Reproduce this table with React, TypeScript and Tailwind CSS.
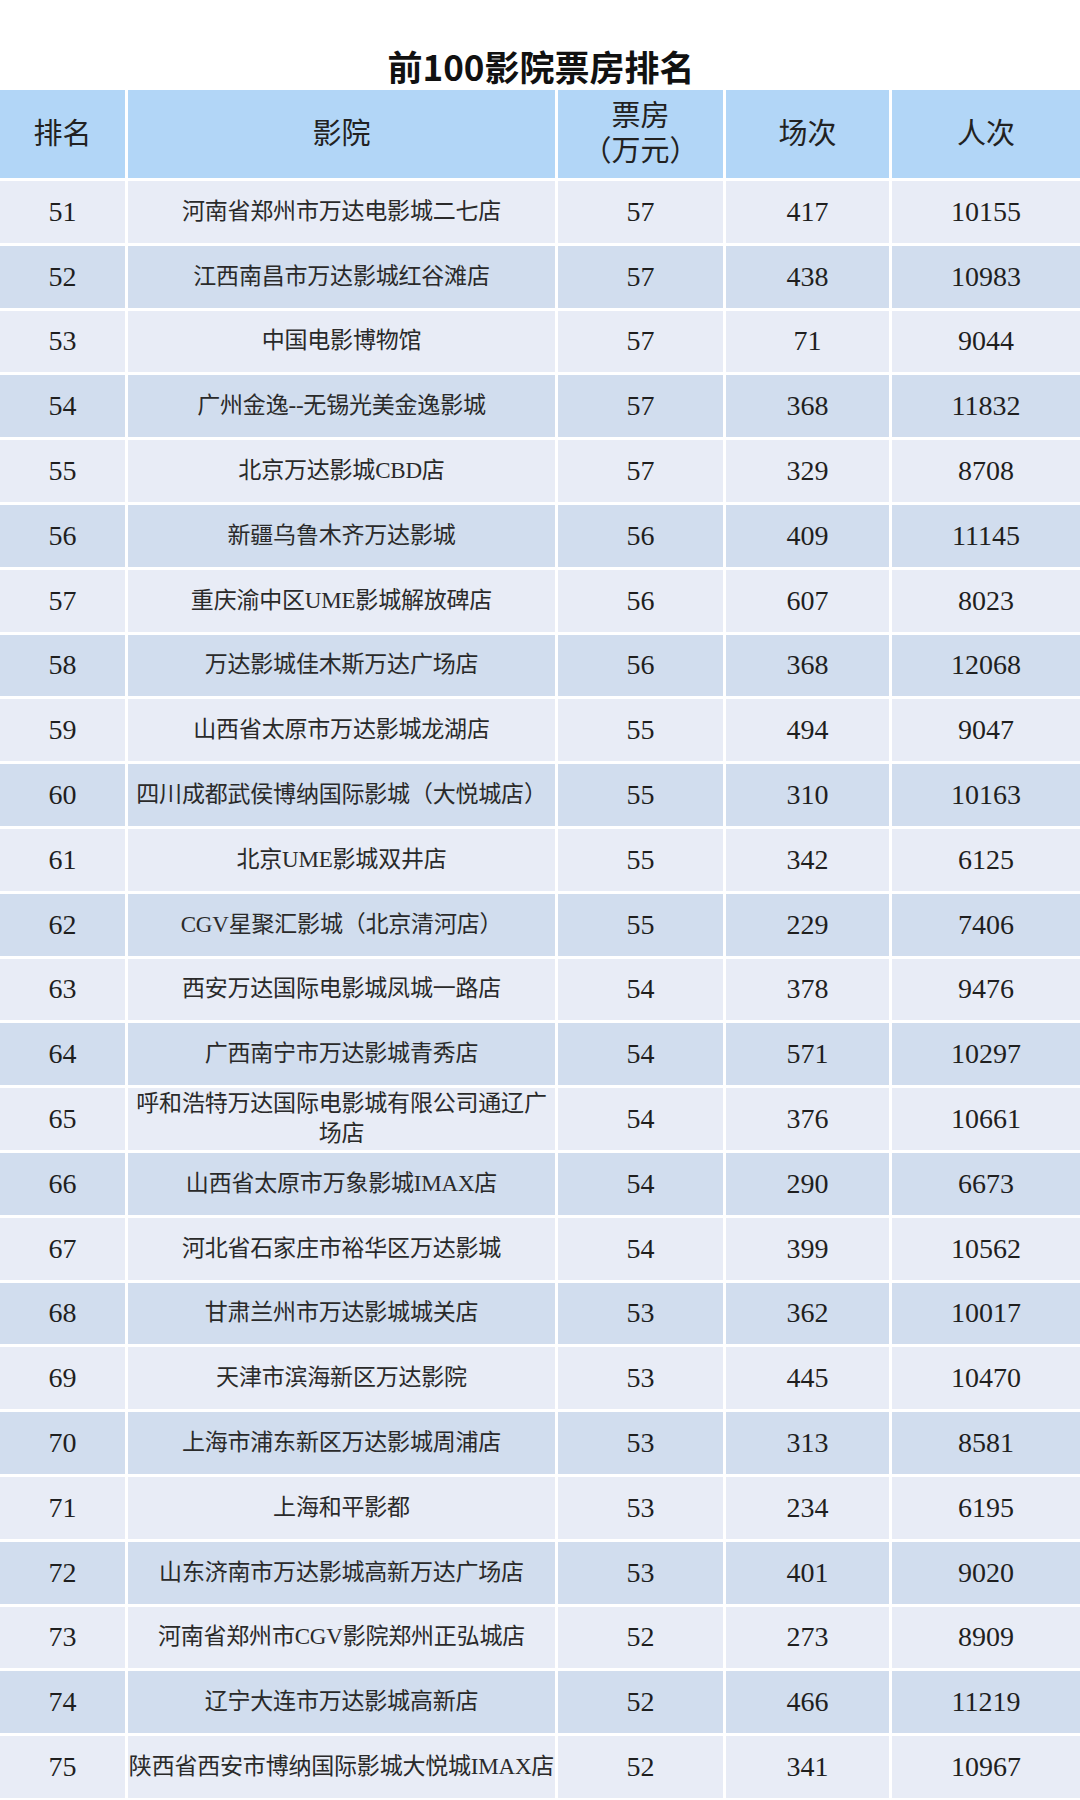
import React from "react";

const rows: [number, React.ReactNode, number, number, number][] = [
  [51, "河南省郑州市万达电影城二七店", 57, 417, 10155],
  [52, "江西南昌市万达影城红谷滩店", 57, 438, 10983],
  [53, "中国电影博物馆", 57, 71, 9044],
  [54, "广州金逸--无锡光美金逸影城", 57, 368, 11832],
  [55, "北京万达影城CBD店", 57, 329, 8708],
  [56, "新疆乌鲁木齐万达影城", 56, 409, 11145],
  [57, "重庆渝中区UME影城解放碑店", 56, 607, 8023],
  [58, "万达影城佳木斯万达广场店", 56, 368, 12068],
  [59, "山西省太原市万达影城龙湖店", 55, 494, 9047],
  [60, "四川成都武侯博纳国际影城（大悦城店）", 55, 310, 10163],
  [61, "北京UME影城双井店", 55, 342, 6125],
  [62, "CGV星聚汇影城（北京清河店）", 55, 229, 7406],
  [63, "西安万达国际电影城凤城一路店", 54, 378, 9476],
  [64, "广西南宁市万达影城青秀店", 54, 571, 10297],
  [
    65,
    <>
      呼和浩特万达国际电影城有限公司通辽广
      <br />
      场店
    </>,
    54,
    376,
    10661,
  ],
  [66, "山西省太原市万象影城IMAX店", 54, 290, 6673],
  [67, "河北省石家庄市裕华区万达影城", 54, 399, 10562],
  [68, "甘肃兰州市万达影城城关店", 53, 362, 10017],
  [69, "天津市滨海新区万达影院", 53, 445, 10470],
  [70, "上海市浦东新区万达影城周浦店", 53, 313, 8581],
  [71, "上海和平影都", 53, 234, 6195],
  [72, "山东济南市万达影城高新万达广场店", 53, 401, 9020],
  [73, "河南省郑州市CGV影院郑州正弘城店", 52, 273, 8909],
  [74, "辽宁大连市万达影城高新店", 52, 466, 11219],
  [75, "陕西省西安市博纳国际影城大悦城IMAX店", 52, 341, 10967],
];

const serif = "font-['Liberation_Serif','Noto_Sans_CJK_SC',serif]";

export default function App() {
  return (
    <div className="w-[1080px] h-[1800px] overflow-hidden bg-white text-[#1f1f1f]">
      <div className="h-[90px] flex items-end justify-center pb-[2px]">
        <h1 className="font-['Noto_Sans_CJK_SC',sans-serif] font-bold text-[35px] leading-[44px] text-[#111] pl-[2px]">
          前100影院票房排名
        </h1>
      </div>
      <div
        className={`grid grid-cols-[125px_427px_165px_163px_188px] gap-[3px] ${serif}`}
      >
        {["排名", "影院", null, "场次", "人次"].map((h, i) => (
          <div
            key={i}
            className="h-[88px] bg-[#b2d6f7] flex flex-col items-center justify-center text-[29px] leading-[35px] text-[#222]"
          >
            {h ?? (
              <>
                <span>票房</span>
                <span>（万元）</span>
              </>
            )}
          </div>
        ))}
        {rows.map(([rank, name, box, shows, people], idx) => {
          const bg = idx % 2 === 0 ? "bg-[#e8ecf6]" : "bg-[#d1ddee]";
          const num = `h-[61.8px] ${bg} flex items-center justify-center text-[28px] leading-none`;
          return (
            <React.Fragment key={rank}>
              <div className={num}>{rank}</div>
              <div
                className={`h-[61.8px] ${bg} flex items-center justify-center text-center whitespace-nowrap text-[23px] leading-[30px] text-[#2a2a2a] tracking-[-0.2px]`}
              >
                <span>{name}</span>
              </div>
              <div className={num}>{box}</div>
              <div className={num}>{shows}</div>
              <div className={num}>{people}</div>
            </React.Fragment>
          );
        })}
      </div>
    </div>
  );
}
